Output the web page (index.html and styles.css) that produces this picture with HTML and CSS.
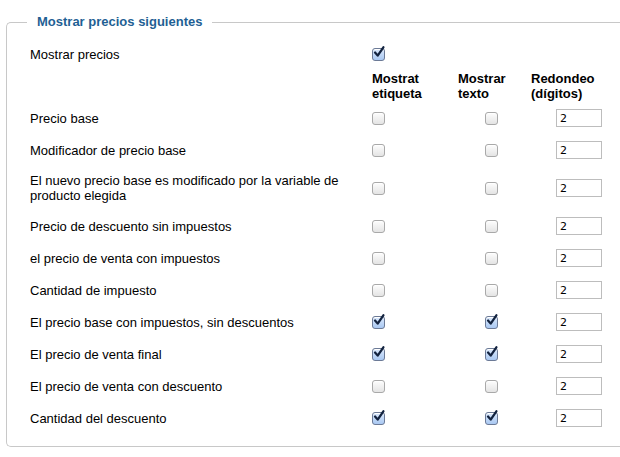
FILE: index.html
```html
<!DOCTYPE html>
<html lang="es">
<head>
  <meta charset="UTF-8" />
  <title>Mostrar precios siguientes</title>
  <link rel="stylesheet" href="styles.css">
</head>
<body>
  <fieldset class="prices">
    <legend>Mostrar precios siguientes</legend>
    <table class="price-table">
      <tr class="top-row">
        <td class="label">Mostrar precios</td>
        <td class="col-a"><span class="cb on"><svg viewBox="0 0 16 16"><path d="M3.5 7.5 L6.5 11 L13 1.5" /></svg></span></td>
        <td></td>
        <td></td>
      </tr>
      <tr class="head-row">
        <th></th>
        <th>Mostrat<br>etiqueta</th>
        <th>Mostrar<br>texto</th>
        <th>Redondeo<br>(dígitos)</th>
      </tr>
      <tr>
        <td class="label">Precio base</td>
        <td class="col-a"><span class="cb"></span></td>
        <td class="col-b"><span class="cb"></span></td>
        <td class="col-c"><input type="text" value="2"></td>
      </tr>
      <tr>
        <td class="label">Modificador de precio base</td>
        <td class="col-a"><span class="cb"></span></td>
        <td class="col-b"><span class="cb"></span></td>
        <td class="col-c"><input type="text" value="2"></td>
      </tr>
      <tr>
        <td class="label">El nuevo precio base es modificado por la variable de producto elegida</td>
        <td class="col-a"><span class="cb"></span></td>
        <td class="col-b"><span class="cb"></span></td>
        <td class="col-c"><input type="text" value="2"></td>
      </tr>
      <tr>
        <td class="label">Precio de descuento sin impuestos</td>
        <td class="col-a"><span class="cb"></span></td>
        <td class="col-b"><span class="cb"></span></td>
        <td class="col-c"><input type="text" value="2"></td>
      </tr>
      <tr>
        <td class="label">el precio de venta con impuestos</td>
        <td class="col-a"><span class="cb"></span></td>
        <td class="col-b"><span class="cb"></span></td>
        <td class="col-c"><input type="text" value="2"></td>
      </tr>
      <tr>
        <td class="label">Cantidad de impuesto</td>
        <td class="col-a"><span class="cb"></span></td>
        <td class="col-b"><span class="cb"></span></td>
        <td class="col-c"><input type="text" value="2"></td>
      </tr>
      <tr>
        <td class="label">El precio base con impuestos, sin descuentos</td>
        <td class="col-a"><span class="cb on"><svg viewBox="0 0 16 16"><path d="M3.5 7.5 L6.5 11 L13 1.5" /></svg></span></td>
        <td class="col-b"><span class="cb on"><svg viewBox="0 0 16 16"><path d="M3.5 7.5 L6.5 11 L13 1.5" /></svg></span></td>
        <td class="col-c"><input type="text" value="2"></td>
      </tr>
      <tr>
        <td class="label">El precio de venta final</td>
        <td class="col-a"><span class="cb on"><svg viewBox="0 0 16 16"><path d="M3.5 7.5 L6.5 11 L13 1.5" /></svg></span></td>
        <td class="col-b"><span class="cb on"><svg viewBox="0 0 16 16"><path d="M3.5 7.5 L6.5 11 L13 1.5" /></svg></span></td>
        <td class="col-c"><input type="text" value="2"></td>
      </tr>
      <tr>
        <td class="label">El precio de venta con descuento</td>
        <td class="col-a"><span class="cb"></span></td>
        <td class="col-b"><span class="cb"></span></td>
        <td class="col-c"><input type="text" value="2"></td>
      </tr>
      <tr>
        <td class="label">Cantidad del descuento</td>
        <td class="col-a"><span class="cb on"><svg viewBox="0 0 16 16"><path d="M3.5 7.5 L6.5 11 L13 1.5" /></svg></span></td>
        <td class="col-b"><span class="cb on"><svg viewBox="0 0 16 16"><path d="M3.5 7.5 L6.5 11 L13 1.5" /></svg></span></td>
        <td class="col-c"><input type="text" value="2"></td>
      </tr>
    </table>
  </fieldset>
</body>
</html>
```

FILE: styles.css
```css
body {
  font-family: "Liberation Sans", Arial, sans-serif;
  font-size: 13px;
  color: #000;
  background: #fff;
  margin: 0;
  padding: 14px 0 0 6px;
}

/* the box runs on past the right edge of the shot */
.prices {
  box-sizing: border-box;
  width: 614px;
  margin: 0;
  padding: 8px 0 12px 23px;
  border: 1px solid #c8c8c8;
  border-right: 0;
  border-radius: 5px 0 0 5px;
}

.prices legend {
  margin-left: -3px;
  padding: 0 10px;
  font-weight: bold;
  font-size: 13px;
  line-height: 16px;
  color: #1f5f94;
}

.price-table {
  border-collapse: collapse;
  border-spacing: 0;
}

.price-table td,
.price-table th {
  padding: 7px 0;
  line-height: 15px;
  vertical-align: middle;
  text-align: left;
}

.price-table .label {
  width: 330px;
  padding-right: 12px;
}

.top-row td {
  height: 18px;
}

.head-row th {
  padding: 1px 0;
  font-weight: bold;
  vertical-align: top;
}

.col-a {
  width: 86px;
}

.col-b {
  width: 46px;
  padding-left: 27px !important;
}

.col-c {
  width: 64px;
  padding-left: 25px !important;
}

.cb {
  display: block;
  position: relative;
  width: 11px;
  height: 11px;
  border: 1px solid #a9a9a9;
  border-radius: 3px;
  background: linear-gradient(#fdfdfd, #e4e4e4);
  box-shadow: inset 0 1px 0 #fff;
}

.cb.on {
  border-color: #6c7a96;
  background: linear-gradient(#dbe9fc, #a9c8f2);
}

.cb svg {
  position: absolute;
  left: -1px;
  top: -3px;
  width: 14px;
  height: 14px;
  fill: none;
  stroke: #13233f;
  stroke-width: 2.6;
  stroke-linecap: round;
  stroke-linejoin: round;
}

.col-c input {
  display: block;
  box-sizing: border-box;
  width: 46px;
  height: 18px;
  margin: 0;
  padding: 0 3px;
  border: 1px solid #bdbdbd;
  font-family: "DejaVu Sans", sans-serif;
  font-size: 11px;
  color: #000;
}
```
